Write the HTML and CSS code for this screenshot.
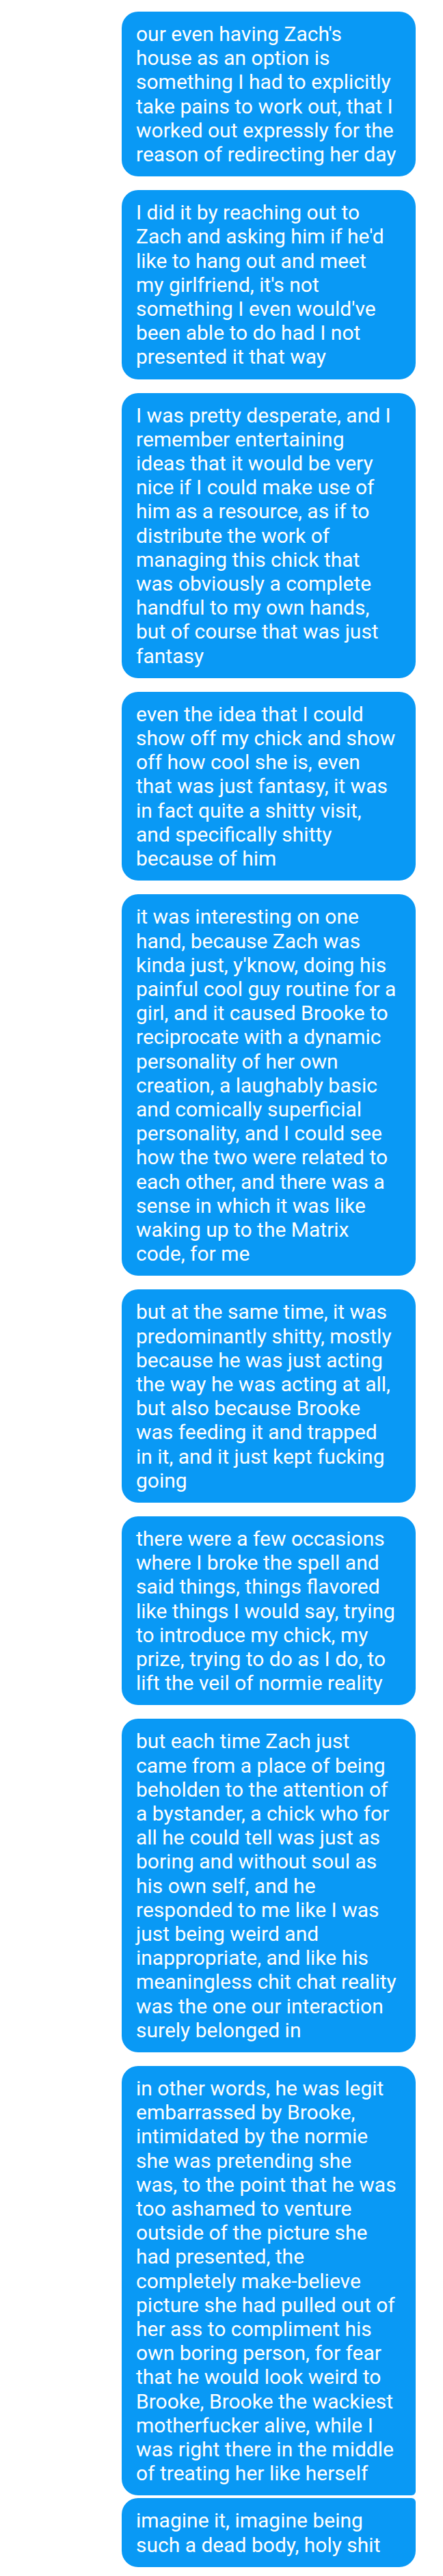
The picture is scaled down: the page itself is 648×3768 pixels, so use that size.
FILE: index.html
```html
<!DOCTYPE html>
<html lang="en">
<head>
<meta charset="utf-8">
<title>Messages</title>
<link rel="stylesheet" href="styles.css">
</head>
<body>
<main class="thread">
  <div class="bubble">our even having Zach's<br>house as an option is<br>something I had to explicitly<br>take pains to work out, that I<br>worked out expressly for the<br>reason of redirecting her day</div>
  <div class="bubble">I did it by reaching out to<br>Zach and asking him if he'd<br>like to hang out and meet<br>my girlfriend, it's not<br>something I even would've<br>been able to do had I not<br>presented it that way</div>
  <div class="bubble">I was pretty desperate, and I<br>remember entertaining<br>ideas that it would be very<br>nice if I could make use of<br>him as a resource, as if to<br>distribute the work of<br>managing this chick that<br>was obviously a complete<br>handful to my own hands,<br>but of course that was just<br>fantasy</div>
  <div class="bubble">even the idea that I could<br>show off my chick and show<br>off how cool she is, even<br>that was just fantasy, it was<br>in fact quite a shitty visit,<br>and specifically shitty<br>because of him</div>
  <div class="bubble">it was interesting on one<br>hand, because Zach was<br>kinda just, y'know, doing his<br>painful cool guy routine for a<br>girl, and it caused Brooke to<br>reciprocate with a dynamic<br>personality of her own<br>creation, a laughably basic<br>and comically superficial<br>personality, and I could see<br>how the two were related to<br>each other, and there was a<br>sense in which it was like<br>waking up to the Matrix<br>code, for me</div>
  <div class="bubble">but at the same time, it was<br>predominantly shitty, mostly<br>because he was just acting<br>the way he was acting at all,<br>but also because Brooke<br>was feeding it and trapped<br>in it, and it just kept fucking<br>going</div>
  <div class="bubble">there were a few occasions<br>where I broke the spell and<br>said things, things flavored<br>like things I would say, trying<br>to introduce my chick, my<br>prize, trying to do as I do, to<br>lift the veil of normie reality</div>
  <div class="bubble">but each time Zach just<br>came from a place of being<br>beholden to the attention of<br>a bystander, a chick who for<br>all he could tell was just as<br>boring and without soul as<br>his own self, and he<br>responded to me like I was<br>just being weird and<br>inappropriate, and like his<br>meaningless chit chat reality<br>was the one our interaction<br>surely belonged in</div>
  <div class="bubble bubble-first">in other words, he was legit<br>embarrassed by Brooke,<br>intimidated by the normie<br>she was pretending she<br>was, to the point that he was<br>too ashamed to venture<br>outside of the picture she<br>had presented, the<br>completely make-believe<br>picture she had pulled out of<br>her ass to compliment his<br>own boring person, for fear<br>that he would look weird to<br>Brooke, Brooke the wackiest<br>motherfucker alive, while I<br>was right there in the middle<br>of treating her like herself</div>
  <div class="bubble bubble-last">imagine it, imagine being<br>such a dead body, holy shit</div>
</main>
</body>
</html>
```
FILE: styles.css
```css
html, body {
  margin: 0;
  padding: 0;
  background: #ffffff;
}

.thread {
  display: flex;
  flex-direction: column;
  align-items: flex-end;
  gap: 20px;
  padding: 17px 40px 16px 0;
}

.bubble {
  box-sizing: border-box;
  width: 430px;
  padding: 15px 20px 15px 21px;
  background: #0999f5;
  color: #ffffff;
  border-radius: 24px;
  font-family: Roboto, "Noto Sans", sans-serif;
  font-size: 30px;
  line-height: 35.2px;
  white-space: nowrap;
}

.bubble-first {
  border-bottom-right-radius: 6px;
}

.bubble-last {
  margin-top: -16px;
  border-top-right-radius: 6px;
}
```
